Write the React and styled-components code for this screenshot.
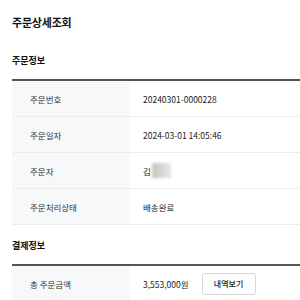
import React from 'react'
import styled, { createGlobalStyle } from 'styled-components'

const GlobalStyle = createGlobalStyle`
  body {
    margin: 0;
    background: #fff;
    font-family: "Noto Sans CJK KR", "Noto Sans", sans-serif;
    color: #222;
  }
`

const Page = styled.div`
  padding: 15px 0 0 12px;
  overflow: hidden;
`

const Title = styled.h1`
  margin: 0;
  font-size: 11px;
  line-height: 14px;
  font-weight: 700;
  letter-spacing: -0.2px;
  color: #111;
`

const SectionTitle = styled.h2`
  margin: ${({ first }) => (first ? '25px' : '14px')} 0 11px;
  font-size: 9px;
  line-height: 14px;
  font-weight: 700;
  color: #111;
`

const Table = styled.div`
  border-top: 2px solid #555;
`

const Row = styled.div`
  display: grid;
  grid-template-columns: 118px 1fr;
  height: 35px;
  border-bottom: 1px solid #ececec;
`

const Label = styled.div`
  display: flex;
  align-items: center;
  padding-left: 18px;
  background: #f7f8fa;
  font-size: 8.5px;
  color: #333;
`

const Value = styled.div`
  display: flex;
  align-items: center;
  padding-left: 13px;
  font-size: 8.5px;
  color: #222;
`

const Masked = styled.span`
  display: inline-block;
  width: 19px;
  height: 15px;
  margin-left: 1px;
  background: linear-gradient(90deg, #c4c4c4, #e6e6e6);
  filter: blur(1.5px);
`

const Button = styled.button`
  margin-left: 13px;
  width: 54px;
  height: 22px;
  padding: 0;
  border: 1px solid #d6d6d6;
  border-radius: 3px;
  background: #fff;
  font-family: inherit;
  font-size: 8px;
  font-weight: 500;
  color: #222;
`

const orderRows = [
  ['주문번호', '20240301-0000228'],
  ['주문일자', '2024-03-01 14:05:46'],
  ['주문자', <>김<Masked /></>],
  ['주문처리상태', '배송완료'],
]

const App = () => (
  <Page>
    <GlobalStyle />
    <Title>주문상세조회</Title>

    <SectionTitle first>주문정보</SectionTitle>
    <Table>
      {orderRows.map(([label, value]) => (
        <Row key={label}>
          <Label>{label}</Label>
          <Value>{value}</Value>
        </Row>
      ))}
    </Table>

    <SectionTitle>결제정보</SectionTitle>
    <Table>
      <Row>
        <Label>총 주문금액</Label>
        <Value>
          3,553,000원
          <Button>내역보기</Button>
        </Value>
      </Row>
    </Table>
  </Page>
)

export default App
